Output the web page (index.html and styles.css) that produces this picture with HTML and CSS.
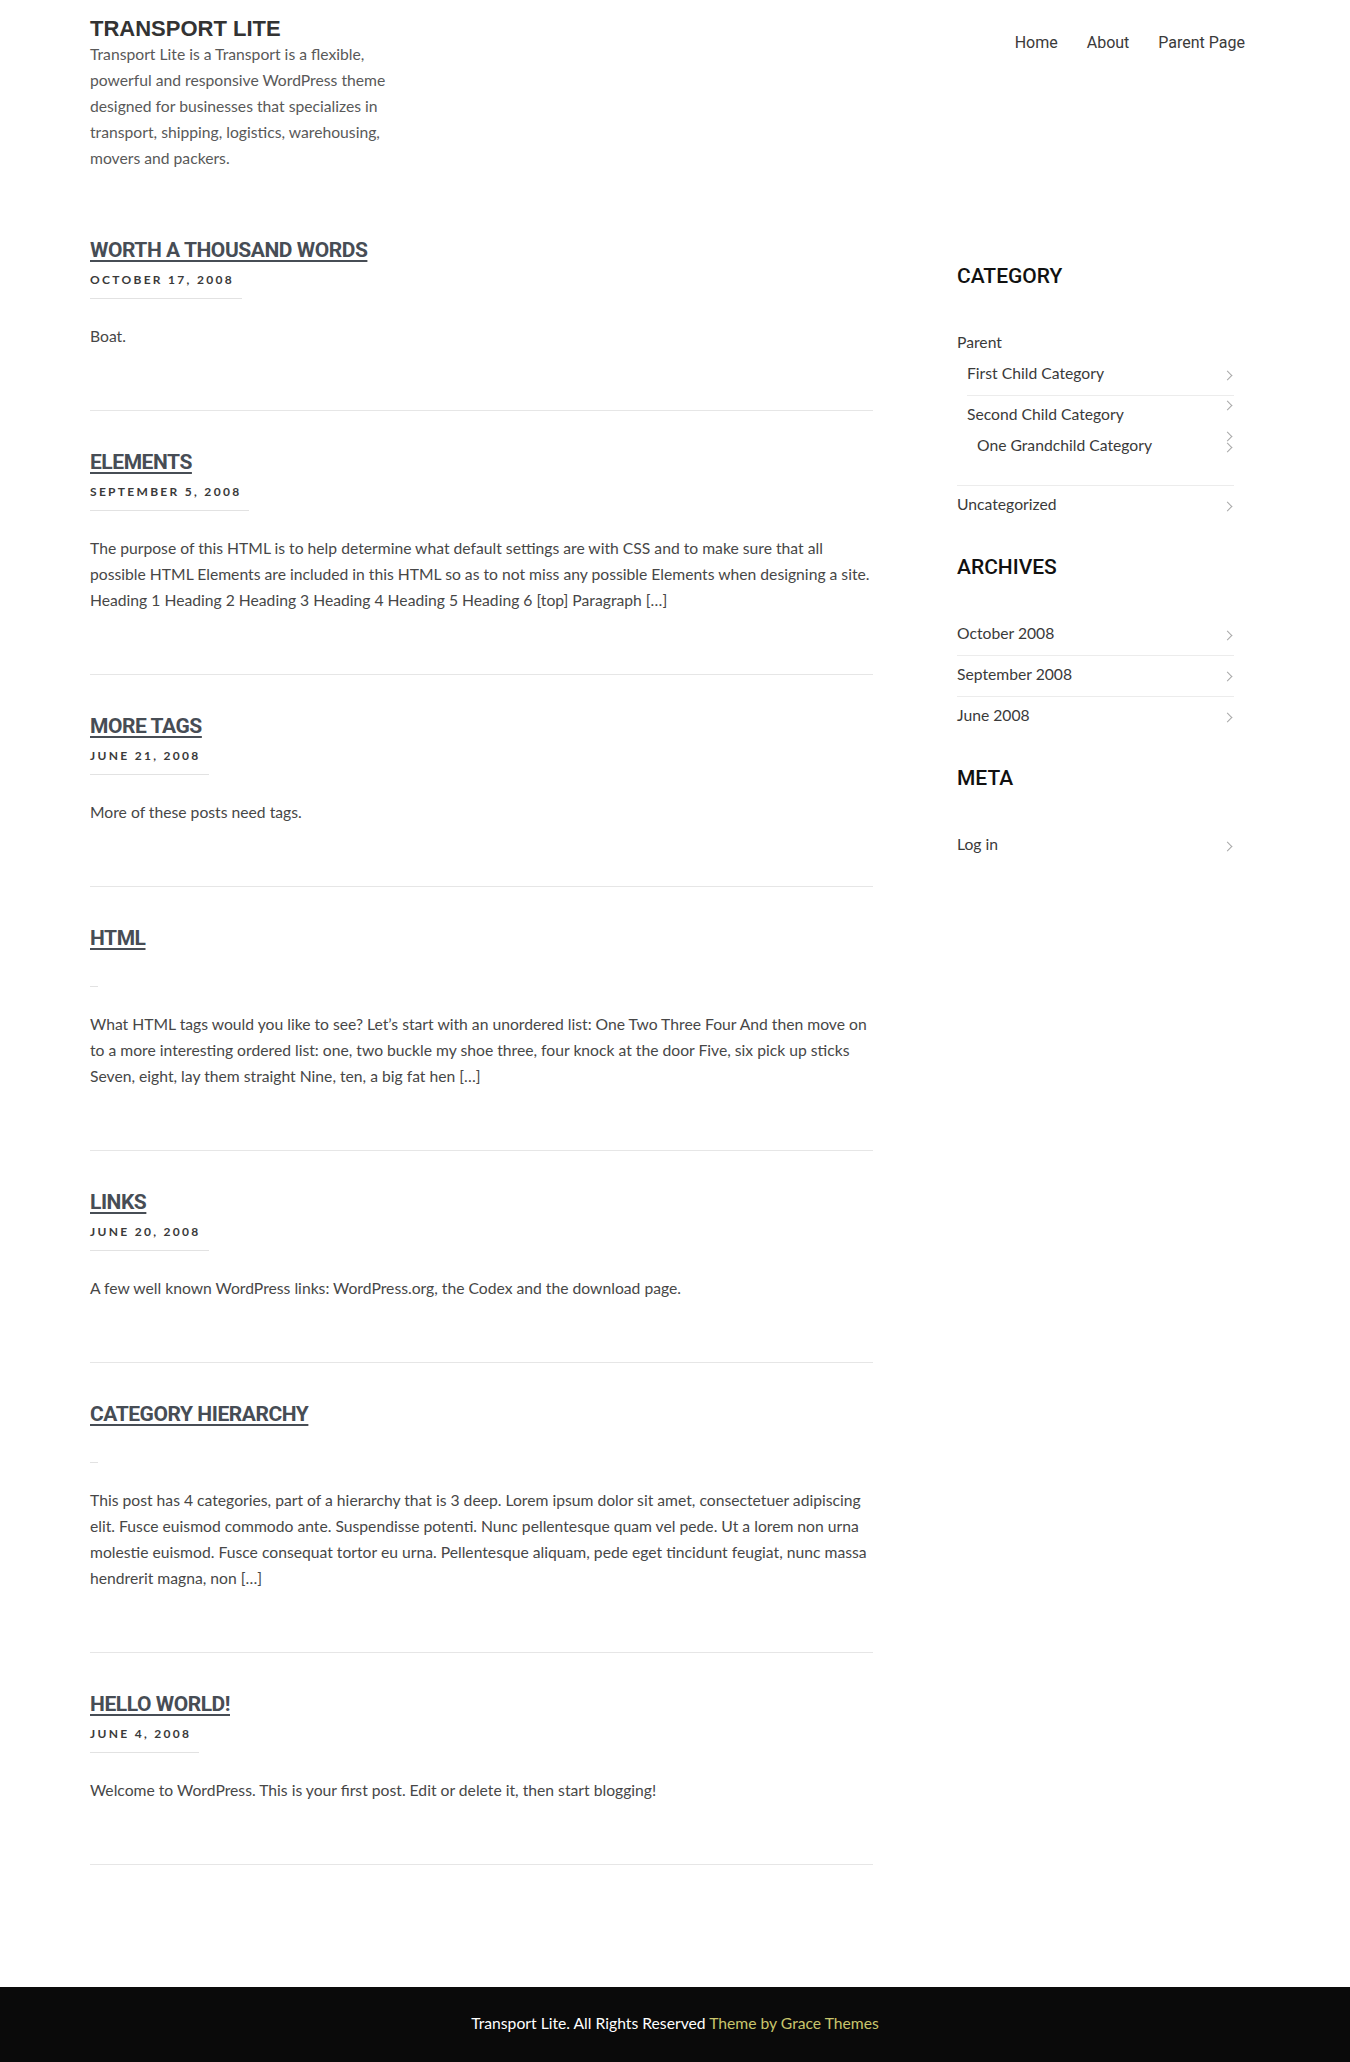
FILE: index.html
```html
<!DOCTYPE html>
<html lang="en">
<head>
<meta charset="utf-8">
<title>Transport Lite</title>
<link rel="stylesheet" href="styles.css">
</head>
<body>
<header class="site-header">
  <div class="container header-inner">
    <div class="branding">
      <h1 class="site-title"><a href="#">TRANSPORT LITE</a></h1>
      <p class="site-desc">Transport Lite is a Transport is a flexible, powerful and responsive WordPress theme designed for businesses that specializes in transport, shipping, logistics, warehousing, movers and packers.</p>
    </div>
    <nav class="main-nav">
      <ul>
        <li><a href="#">Home</a></li>
        <li><a href="#">About</a></li>
        <li><a href="#">Parent Page</a></li>
      </ul>
    </nav>
  </div>
</header>

<div class="container content">
  <main class="posts">
    <article class="post">
      <h2 class="post-title"><a href="#">WORTH A THOUSAND WORDS</a></h2>
      <div class="post-date">OCTOBER 17, 2008</div>
      <p class="post-excerpt">Boat.</p>
    </article>
    <article class="post">
      <h2 class="post-title"><a href="#">ELEMENTS</a></h2>
      <div class="post-date">SEPTEMBER 5, 2008</div>
      <p class="post-excerpt">The purpose of this HTML is to help determine what default settings are with CSS and to make sure that all possible HTML Elements are included in this HTML so as to not miss any possible Elements when designing a site. Heading 1 Heading 2 Heading 3 Heading 4 Heading 5 Heading 6 [top] Paragraph [&hellip;]</p>
    </article>
    <article class="post">
      <h2 class="post-title"><a href="#">MORE TAGS</a></h2>
      <div class="post-date">JUNE 21, 2008</div>
      <p class="post-excerpt">More of these posts need tags.</p>
    </article>
    <article class="post">
      <h2 class="post-title"><a href="#">HTML</a></h2>
      <div class="post-date"></div>
      <p class="post-excerpt">What HTML tags would you like to see? Let&rsquo;s start with an unordered list: One Two Three Four And then move on to a more interesting ordered list: one, two buckle my shoe three, four knock at the door Five, six pick up sticks Seven, eight, lay them straight Nine, ten, a big fat hen [&hellip;]</p>
    </article>
    <article class="post">
      <h2 class="post-title"><a href="#">LINKS</a></h2>
      <div class="post-date">JUNE 20, 2008</div>
      <p class="post-excerpt">A few well known WordPress links: WordPress.org, the Codex and the download page.</p>
    </article>
    <article class="post">
      <h2 class="post-title"><a href="#">CATEGORY HIERARCHY</a></h2>
      <div class="post-date"></div>
      <p class="post-excerpt">This post has 4 categories, part of a hierarchy that is 3 deep. Lorem ipsum dolor sit amet, consectetuer adipiscing elit. Fusce euismod commodo ante. Suspendisse potenti. Nunc pellentesque quam vel pede. Ut a lorem non urna molestie euismod. Fusce consequat tortor eu urna. Pellentesque aliquam, pede eget tincidunt feugiat, nunc massa hendrerit magna, non [&hellip;]</p>
    </article>
    <article class="post">
      <h2 class="post-title"><a href="#">HELLO WORLD!</a></h2>
      <div class="post-date">JUNE 4, 2008</div>
      <p class="post-excerpt">Welcome to WordPress. This is your first post. Edit or delete it, then start blogging!</p>
    </article>
  </main>

  <aside class="sidebar">
    <section class="widget">
      <h3 class="widget-title">CATEGORY</h3>
      <ul class="widget-list">
        <li><a href="#">Parent</a>
          <ul class="children">
            <li><a href="#">First Child Category</a></li>
            <li><a href="#">Second Child Category</a>
              <ul class="children">
                <li><a href="#">One Grandchild Category</a></li>
              </ul>
            </li>
          </ul>
        </li>
        <li><a href="#">Uncategorized</a></li>
      </ul>
    </section>
    <section class="widget">
      <h3 class="widget-title">ARCHIVES</h3>
      <ul class="widget-list">
        <li><a href="#">October 2008</a></li>
        <li><a href="#">September 2008</a></li>
        <li><a href="#">June 2008</a></li>
      </ul>
    </section>
    <section class="widget">
      <h3 class="widget-title">META</h3>
      <ul class="widget-list">
        <li><a href="#">Log in</a></li>
      </ul>
    </section>
  </aside>
</div>

<footer class="site-footer">
  <p>Transport Lite. All Rights Reserved <a href="#">Theme by Grace Themes</a></p>
</footer>
</body>
</html>
```

FILE: styles.css
```css
* {
  box-sizing: border-box;
}

html, body {
  margin: 0;
  padding: 0;
}

body {
  font-family: "Lato", "Liberation Sans", sans-serif;
  font-size: 15.7px;
  line-height: 26px;
  color: #474747;
  background: #fff;
}

a {
  color: inherit;
  text-decoration: none;
}

ul {
  list-style: none;
  margin: 0;
  padding: 0;
}

.container {
  width: 1170px;
  margin: 0 auto;
}

/* Header */
.site-header {
  padding-top: 16px;
}

.header-inner {
  display: flex;
  justify-content: space-between;
  align-items: flex-start;
}

.branding {
  width: 310px;
}

.site-title {
  margin: 0;
  font-family: "Liberation Sans", Arial, sans-serif;
  font-weight: 700;
  font-size: 22px;
  line-height: 25px;
  color: #333;
}

.site-desc {
  margin: 0;
  color: #595959;
}

.main-nav {
  margin-top: 13px;
  padding-right: 15px;
}

.main-nav ul {
  display: flex;
  gap: 29px;
}

.main-nav a {
  font-family: "Roboto", sans-serif;
  font-size: 16px;
  line-height: 26px;
  color: #3a3a3a;
}

/* Content */
.content {
  display: grid;
  grid-template-columns: 783px 1fr;
  column-gap: 84px;
  padding-top: 28px;
}

.post {
  padding: 36px 0 61px;
  border-bottom: 1px solid #e6e6e6;
}

.post-title {
  margin: 0;
  font-family: "Roboto", sans-serif;
  font-weight: 700;
  font-size: 21px;
  line-height: 30px;
  letter-spacing: -0.45px;
}

.post-title a {
  color: #474d55;
  text-decoration: underline;
  text-decoration-thickness: 2px;
  text-underline-offset: 3px;
}

.post-date {
  width: fit-content;
  min-height: 29px;
  margin-top: 5px;
  padding: 0 8px 8px 0;
  border-bottom: 1px solid #e2e2e2;
  font-size: 12px;
  font-weight: 700;
  line-height: 20px;
  letter-spacing: 2.3px;
  color: #3a3a3a;
}

.post-excerpt {
  margin: 24px 0 0;
}

/* Sidebar */
.sidebar {
  padding-top: 62px;
  padding-right: 26px;
}

.widget {
  margin-bottom: 26px;
}

.widget-title {
  margin: 0 0 33px;
  font-family: "Roboto", sans-serif;
  font-weight: 500;
  font-size: 21px;
  line-height: 30px;
  color: #111;
}

.widget-list li {
  position: relative;
  padding: 5px 0 9px;
}

.widget-list li + li {
  border-top: 1px solid #ececec;
}

.widget-list li::after {
  content: "";
  position: absolute;
  right: 3px;
  top: 50%;
  width: 6px;
  height: 6px;
  margin-top: -3px;
  border-top: 1px solid #a8a8a8;
  border-right: 1px solid #a8a8a8;
  transform: rotate(45deg);
}

.widget-list a {
  color: #3a3a3a;
}

.widget-list .children {
  padding-left: 10px;
}

/* Footer */
.site-footer {
  margin-top: 122px;
  background: #0a0a0a;
  padding: 23px 0 27px;
  text-align: center;
}

.site-footer p {
  margin: 0;
  color: #fff;
}

.site-footer a {
  color: #c9c56c;
}
```
